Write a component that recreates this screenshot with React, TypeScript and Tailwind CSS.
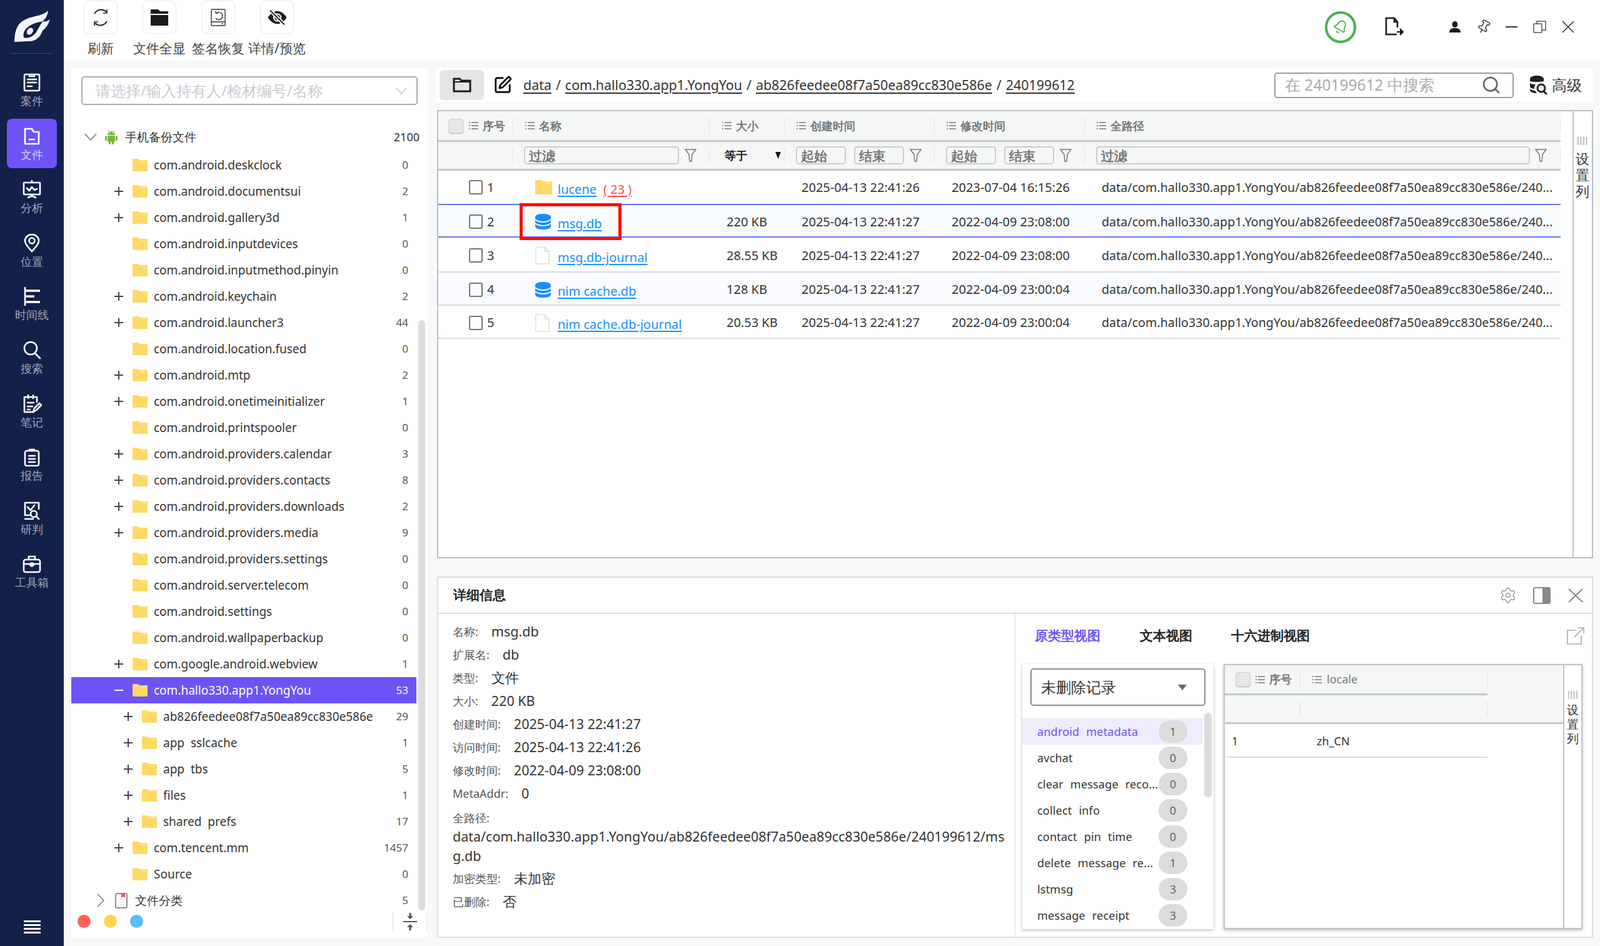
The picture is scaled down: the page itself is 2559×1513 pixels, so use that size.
import { Bell, Pin, Search, Settings, SquarePen } from 'lucide-react';
import { BsEyeSlashFill } from 'react-icons/bs';

const NAV_ITEMS = ['案件', '文件', '分析', '位置', '时间线', '搜索', '笔记', '报告', '研判', '工具箱'];

const TREE_ROWS = [
  { name: 'com.android.deskclock', count: '0' },
  { name: 'com.android.documentsui', count: '2', plus: true },
  { name: 'com.android.gallery3d', count: '1', plus: true },
  { name: 'com.android.inputdevices', count: '0' },
  { name: 'com.android.inputmethod.pinyin', count: '0' },
  { name: 'com.android.keychain', count: '2', plus: true },
  { name: 'com.android.launcher3', count: '44', plus: true },
  { name: 'com.android.location.fused', count: '0' },
  { name: 'com.android.mtp', count: '2', plus: true },
  { name: 'com.android.onetimeinitializer', count: '1', plus: true },
  { name: 'com.android.printspooler', count: '0' },
  { name: 'com.android.providers.calendar', count: '3', plus: true },
  { name: 'com.android.providers.contacts', count: '8', plus: true },
  { name: 'com.android.providers.downloads', count: '2', plus: true },
  { name: 'com.android.providers.media', count: '9', plus: true },
  { name: 'com.android.providers.settings', count: '0' },
  { name: 'com.android.server.telecom', count: '0' },
  { name: 'com.android.settings', count: '0' },
  { name: 'com.android.wallpaperbackup', count: '0' },
  { name: 'com.google.android.webview', count: '1', plus: true },
  { name: 'com.hallo330.app1.YongYou', count: '53', selected: true },
  { name: 'ab826feedee08f7a50ea89cc830e586e', count: '29', plus: true, child: true },
  { name: 'app sslcache', count: '1', plus: true, child: true },
  { name: 'app tbs', count: '5', plus: true, child: true },
  { name: 'files', count: '1', plus: true, child: true },
  { name: 'shared prefs', count: '17', plus: true, child: true },
  { name: 'com.tencent.mm', count: '1457', plus: true },
  { name: 'Source', count: '0' },
];

const PATH_TEXT = 'data/com.hallo330.app1.YongYou/ab826feedee08f7a50ea89cc830e586e/240...';

const FILES = [
  { no: '1', name: 'lucene', kind: 'folder', size: '', created: '2025-04-13 22:41:26', modified: '2023-07-04 16:15:26', rowClass: 'h-[55px] border-b-2 border-[#7070f0]' },
  { no: '2', name: 'msg.db', kind: 'db', size: '220 KB', created: '2025-04-13 22:41:27', modified: '2022-04-09 23:08:00', rowClass: 'h-[52px] pt-[3px] border-b-2 border-[#7070f0] bg-[#f8fbff]', boxed: true },
  { no: '3', name: 'msg.db-journal', kind: 'file', size: '28.55 KB', created: '2025-04-13 22:41:27', modified: '2022-04-09 23:08:00', rowClass: 'h-[56px] pt-[3px] border-b-2 border-[#d9dbde]' },
  { no: '4', name: 'nim cache.db', kind: 'db', size: '128 KB', created: '2025-04-13 22:41:27', modified: '2022-04-09 23:00:04', rowClass: 'h-[53px] pt-[3px] border-b-2 border-[#d9dbde] bg-[#fafbfe]' },
  { no: '5', name: 'nim cache.db-journal', kind: 'file', size: '20.53 KB', created: '2025-04-13 22:41:27', modified: '2022-04-09 23:00:04', rowClass: 'h-[53px] pt-[3px] border-b-2 border-[#d9dbde]' },
];

const TABLES = [
  { name: 'android metadata', count: '1', active: true },
  { name: 'avchat', count: '0' },
  { name: 'clear message reco...', count: '0' },
  { name: 'collect info', count: '0' },
  { name: 'contact pin time', count: '0' },
  { name: 'delete message re...', count: '1' },
  { name: 'lstmsg', count: '3' },
  { name: 'message receipt', count: '3' },
];

function Logo() {
  return (
    <svg width="57" height="50" viewBox="0 0 57 50">
      <path d="M0 50C1 33 3 20 20 13 33 8 46 8 54 0 53 8 50 13 45 17 49 18 53 17 57 14 54 24 48 30 45 32 42 42 34 49 24 49 14 49 8 50 0 50Z" fill="#f4f5f7" />
      <path d="M15 43C12 31 24 20 46 17 41 22 38 30 34 36 28 43 20 45 15 43Z" fill="#12204a" />
      <ellipse cx="25" cy="33" rx="4.5" ry="6" transform="rotate(35 25 33)" fill="#f4f5f7" />
    </svg>
  );
}

function NavIcon({ label }: { label: string }) {
  const stroke = { fill: 'none', stroke: 'white', strokeWidth: 2.6, strokeLinecap: 'round' as const, strokeLinejoin: 'round' as const };
  return (
    <svg width="32" height="30" viewBox="0 0 32 30" {...stroke}>
      {label === '案件' && (
        <>
          <rect x="4" y="2" width="24" height="26" rx="2" />
          <path d="M12 2v3h8V2M9 10h14M9 15h14M9 21h7" />
        </>
      )}
      {label === '文件' && (
        <>
          <path d="M5 3h11l3 5h8v19H5z" />
          <path d="M12 20h8" />
        </>
      )}
      {label === '分析' && (
        <>
          <rect x="3" y="4" width="26" height="19" rx="1" />
          <path d="M16 1v3M8 13l4 4 4-6 4 5 4-2M16 23v3M10 28l6-3 6 3" />
        </>
      )}
      {label === '位置' && (
        <>
          <path d="M16 28C9 20 5 16 5 11a11 10 0 0 1 22 0c0 5-4 9-11 17z" />
          <circle cx="16" cy="11" r="4.5" />
        </>
      )}
      {label === '时间线' && (
        <>
          <path d="M5 1v28" />
          <path d="M5 6h24M5 15h15M5 24h24" strokeWidth="3.4" strokeLinecap="butt" />
        </>
      )}
      {label === '搜索' && (
        <>
          <circle cx="14" cy="12" r="10" />
          <path d="M21 20l8 8" />
        </>
      )}
      {label === '笔记' && (
        <>
          <path d="M24 12V4H4v24h14" />
          <path d="M10 1v5M18 1v5M9 13h10M9 19h8M9 24h4M18 28l2-6 8-8 3 3-8 8z" />
        </>
      )}
      {label === '报告' && (
        <>
          <rect x="5" y="5" width="22" height="24" rx="3" />
          <path d="M12 5V3h8v2M11 13h10M11 18h10M11 23h10" />
        </>
      )}
      {label === '研判' && (
        <>
          <path d="M27 12V2H5v20h7" />
          <path d="M9 9l5 5 6-8M5 28h13" />
          <circle cx="19" cy="20" r="5" />
          <path d="M23 24l4 4" />
        </>
      )}
      {label === '工具箱' && (
        <>
          <rect x="3" y="8" width="26" height="20" rx="3" />
          <path d="M11 8V3h10v5M3 15h10M19 15h10" />
          <circle cx="16" cy="16" r="2.5" fill="white" />
        </>
      )}
    </svg>
  );
}

function FolderIcon({ className = 'h-[20px] w-[24px]' }: { className?: string }) {
  return (
    <svg viewBox="0 0 24 20" preserveAspectRatio="none" className={`shrink-0 ${className}`}>
      <path d="M0 1a1 1 0 0 1 1-1h8l2 2h13v18H1a1 1 0 0 1-1-1z" fill="#ffd966" />
      <path d="M14 4h7v1h-7z" fill="#fff2c4" />
    </svg>
  );
}

function AndroidIcon() {
  return (
    <svg width="20" height="23" viewBox="0 0 20 23" fill="#7cb342" className="ml-[13px] shrink-0">
      <path d="M4 8a6 6 0 0 1 12 0z" />
      <path d="M6 3L4.500 0.500M14 3l1.500-2.500" stroke="#7cb342" strokeWidth="1" />
      <path d="M4 9h12v9a1 1 0 0 1-1 1H5a1 1 0 0 1-1-1z" />
      <rect x="0" y="9" width="3" height="8" rx="1.500" />
      <rect x="17" y="9" width="3" height="8" rx="1.500" />
      <rect x="6" y="18" width="3" height="5" rx="1.500" />
      <rect x="11" y="18" width="3" height="5" rx="1.500" />
      <circle cx="7.500" cy="5" r="0.800" fill="white" />
      <circle cx="12.500" cy="5" r="0.800" fill="white" />
    </svg>
  );
}

function Plus({ minus, light }: { minus?: boolean; light?: boolean }) {
  return (
    <svg width="14" height="14" viewBox="0 0 14 14" className="shrink-0">
      <path d={minus ? 'M0 7h14' : 'M0 7h14M7 0v14'} stroke={light ? 'white' : '#444'} strokeWidth="2" />
    </svg>
  );
}

function Toolbar() {
  const items = [
    {
      label: '刷新',
      icon: (
        <svg width="28" height="28" viewBox="0 0 28 28" fill="none" stroke="#222" strokeWidth="2">
          <path d="M4 8A12 12 0 0 1 23 5M24 20A12 12 0 0 1 5 23" />
          <path d="M24 1v6h-6M4 27v-6h6" strokeWidth="1.6" />
        </svg>
      ),
    },
    {
      label: '文件全显',
      icon: (
        <svg width="28" height="26" viewBox="0 0 28 26" fill="#1c1c1c">
          <path d="M0 0h12l3 3h13v4H0zM0 9h28v17H0z" />
        </svg>
      ),
    },
    {
      label: '签名恢复',
      icon: (
        <svg width="24" height="28" viewBox="0 0 24 28" fill="none" stroke="#333" strokeWidth="1.4">
          <rect x="1" y="1" width="22" height="26" rx="1" />
          <path d="M1 21h22M17 24h3" />
          <path d="M9 7a6 6 0 1 1-1 8" />
          <path d="M7 4l2 3.500 3-1.500" />
        </svg>
      ),
    },
    { label: '详情/预览', icon: <BsEyeSlashFill className="w-[33px] h-[30px] text-[#1c1c1c]" /> },
  ];
  return (
    <div className="flex h-[97px] shrink-0 bg-white pl-[12px]">
      {items.map((item) => (
        <div key={item.label} className="flex w-[94px] flex-col items-center pt-[1px]">
          <div className="flex h-[53px] w-[54px] items-center justify-center rounded-[8px] border border-[#e6e6e6]">{item.icon}</div>
          <span className="mt-[8px] whitespace-nowrap text-[21px] leading-[30px] text-[#444]">{item.label}</span>
        </div>
      ))}
      <div className="ml-auto flex h-[86px] items-center pr-[41px]">
        <div className="flex h-[51px] w-[50px] items-center justify-center rounded-full border-[4px] border-[#4caf50]">
          <Bell className="h-[24px] w-[24px] rotate-[30deg] text-[#4caf50]" strokeWidth={1.8} />
        </div>
        <svg width="30" height="32" viewBox="0 0 30 32" fill="none" stroke="#1c1c1c" strokeWidth="2.600" className="ml-[46px]">
          <path d="M19 28H2V2h13l5 6v9M15 2v6h5" />
          <path d="M19 24h9M24 19l5 5-5 5" fill="#1c1c1c" strokeWidth="2" />
        </svg>
        <svg width="18" height="18" viewBox="0 0 18 18" fill="#1c1c1c" className="ml-[73px]">
          <ellipse cx="9" cy="5" rx="4.500" ry="5" />
          <path d="M0 18c0-5 3-6 6-7h6c3 1 6 2 6 7z" />
        </svg>
        <Pin className="ml-[25px] h-[24px] w-[24px] rotate-[30deg] text-[#333]" strokeWidth={1.5} />
        <div className="ml-[23px] h-[2px] w-[19px] bg-[#333]" />
        <svg width="21" height="20" viewBox="0 0 21 20" fill="none" stroke="#555" strokeWidth="1.500" className="ml-[25px]">
          <rect x="1" y="5" width="13" height="14" rx="1" />
          <path d="M6 5V1h14v14h-6" />
        </svg>
        <svg width="20" height="20" viewBox="0 0 20 20" stroke="#333" strokeWidth="1.600" className="ml-[25px]">
          <path d="M1 1l18 18M19 1L1 19" />
        </svg>
      </div>
    </div>
  );
}

function TreePanel() {
  return (
    <div className="relative h-[1390px] w-[570px] shrink-0 bg-white pt-[13px]">
      <div className="mx-[16px] flex h-[46px] items-center justify-between rounded-[5px] border-2 border-[#aaacaf] pl-[21px] pr-[15px]">
        <span className="text-[24.300px] text-[#c8ccd3]">请选择/输入持有人/检材编号/名称</span>
        <svg width="18" height="11" viewBox="0 0 18 11" fill="none" stroke="#c8ccd3" strokeWidth="1.500">
          <path d="M1 1l8 9 8-9" />
        </svg>
      </div>

      <div className="mt-[30px]">
        <div className="mb-[3px] flex h-[42px] w-[557px] items-center pl-[21px]">
          <svg width="20" height="12" viewBox="0 0 20 12" fill="none" stroke="#666" strokeWidth="1.200">
            <path d="M1 1l9 10 9-10" />
          </svg>
          <AndroidIcon />
          <span className="ml-[12px] text-[19px] text-[#333]">手机备份文件</span>
          <span className="ml-auto text-[18px] text-[#333]">2100</span>
        </div>

        {TREE_ROWS.map((row) => (
          <div
            key={row.name}
            className={`flex h-[42px] w-[552px] items-center pr-[13px] ${row.child ? 'pl-[84px]' : 'pl-[69px]'} ${row.selected ? 'bg-[#6c54f6] text-white' : 'text-[#333]'}`}
          >
            <div className="w-[14px] shrink-0">{row.plus && <Plus />}{row.selected && <Plus minus light />}</div>
            <div className="ml-[15px]"><FolderIcon /></div>
            <span className="ml-[10px] whitespace-nowrap text-[19px] leading-none [word-spacing:5px]">{row.name}</span>
            <span className={`ml-auto text-[17px] ${row.selected ? 'text-white' : 'text-[#555]'}`}>{row.count}</span>
          </div>
        ))}

        <div className="flex h-[42px] w-[552px] items-center pl-[40px] pr-[13px]">
          <svg width="14" height="22" viewBox="0 0 14 22" fill="none" stroke="#666" strokeWidth="1.200" className="shrink-0">
            <path d="M2 1l10 10-10 10" />
          </svg>
          <svg width="20" height="25" viewBox="0 0 20 25" fill="none" className="ml-[16px] shrink-0">
            <rect x="1" y="1" width="18" height="23" rx="2.500" stroke="#8a8f96" strokeWidth="2" />
            <path d="M10 1h6v7l-3-2-3 2z" fill="#f0506e" />
            <path d="M5 11h10M5 15h10M5 19h10" stroke="#e3e5e8" strokeWidth="1.500" />
          </svg>
          <span className="ml-[12px] text-[19px] text-[#333]">文件分类</span>
          <span className="ml-auto text-[17px] text-[#555]">5</span>
        </div>
      </div>

      <div className="-mt-[2px] flex h-[29px] items-center pl-[10px]">
        <div className="h-[21px] w-[21px] shrink-0 rounded-full bg-[#ff6157]" />
        <div className="ml-[21px] h-[21px] w-[21px] shrink-0 rounded-full bg-[#ffd64c]" />
        <div className="ml-[21px] h-[21px] w-[21px] shrink-0 rounded-full bg-[#58bcff]" />
        <div className="ml-[399px] flex h-[29px] w-[55px] shrink-0 items-center justify-center border-x border-[#dcdcdc]">
          <svg width="22" height="28" viewBox="0 0 22 28" fill="#555">
            <path d="M9.500 0h3v5H16l-5 5-5-5h3.500zM0 13h22v2H0zM11 18l5 5h-3.500v5h-3v-5H6z" />
          </svg>
        </div>
      </div>

      <div className="absolute left-[555px] top-[403px] h-[944px] w-[11px] rounded-full bg-[#dcdcdc]" />
    </div>
  );
}

function ListIcon() {
  return (
    <svg width="15" height="14" viewBox="0 0 15 14" stroke="#777" strokeWidth="1.500" className="shrink-0">
      <path d="M0 2h2M4 2h11M0 7h2M4 7h11M0 12h2M4 12h11" />
    </svg>
  );
}

function FunnelIcon() {
  return (
    <svg width="19" height="21" viewBox="0 0 19 21" fill="none" stroke="#777" strokeWidth="1.500" className="shrink-0">
      <path d="M1 1h17l-6 8-1 11H8L7 9z" />
    </svg>
  );
}

function FilterBox({ text, className }: { text: string; className: string }) {
  return (
    <div className={`flex h-[29px] items-center rounded-[5px] border-2 border-[#c9cdcf] pl-[6px] pt-[2px] text-[21px] font-bold text-[#777] ${className}`}>{text}</div>
  );
}

function Checkbox({ header }: { header?: boolean }) {
  if (header) {
    return <div className="h-[23px] w-[23px] shrink-0 rounded-[4px] border border-[#cfd1d3] bg-[#e6e7e8] shadow-[0_1px_2px_#bbb]" />;
  }
  return <div className="h-[23px] w-[22px] shrink-0 rounded-[3px] border-2 border-[#777]" />;
}

function HeaderLabel({ text }: { text: string }) {
  return (
    <>
      <ListIcon />
      <span className="ml-[7px] whitespace-nowrap text-[18px] font-semibold text-[#777]">{text}</span>
    </>
  );
}

function DbIcon() {
  return (
    <svg width="25" height="25" viewBox="0 0 25 25">
      <path d="M0 5C0 2 5 0 12.500 0S25 2 25 5v15c0 3-5 5-12.500 5S0 23 0 20z" fill="#1a8cff" />
      <path d="M0 9c3 3 8 4 12.500 4S22 12 25 9M0 15c3 3 8 4 12.500 4S22 18 25 15" fill="none" stroke="white" strokeWidth="1.800" />
    </svg>
  );
}

function FileIcon() {
  return (
    <svg width="23" height="29" viewBox="0 0 23 29" fill="white" stroke="#dcdfe3" strokeWidth="1.500">
      <path d="M1 1h14l7 7v20H1zM15 1v7h7" />
    </svg>
  );
}

function FileTable() {
  return (
    <div className="mt-[13px] ml-[2px] flex h-[717px] border-2 border-[#bcc0c4] bg-white">
      <div className="w-[1795px] shrink-0">
        <div className="flex h-[49px] items-center border-b-[3px] border-[#c2c6ca] bg-[#f5f7f7]">
          <div className="flex w-[118px] items-center pl-[17px]">
            <Checkbox header />
            <div className="ml-[9px] flex items-center"><ListIcon /><span className="ml-[7px] text-[18px] font-semibold text-[#777]">序号</span></div>
          </div>
          <div className="flex h-[24px] w-[315px] items-center border-l border-[#dfe1e3] pl-[20px]"><HeaderLabel text="名称" /></div>
          <div className="flex h-[24px] w-[120px] items-center border-l border-[#dfe1e3] pl-[20px]"><HeaderLabel text="大小" /></div>
          <div className="flex h-[24px] w-[240px] items-center border-l border-[#dfe1e3] pl-[19px]"><HeaderLabel text="创建时间" /></div>
          <div className="flex h-[24px] w-[240px] items-center border-l border-[#dfe1e3] pl-[19px]"><HeaderLabel text="修改时间" /></div>
          <div className="flex h-[24px] flex-1 items-center border-x border-[#dfe1e3] pl-[19px]"><HeaderLabel text="全路径" /></div>
        </div>
        <div className="flex h-[46px] items-center border-b-[3px] border-[#c2c6ca] bg-[#f5f7f7]">
          <div className="h-[24px] w-[118px]" />
          <div className="flex h-[24px] w-[315px] items-center border-l border-[#dfe1e3] pl-[18px]">
            <FilterBox text="过滤" className="w-[248px]" />
            <div className="ml-[9px]"><FunnelIcon /></div>
          </div>
          <div className="flex h-[24px] w-[120px] items-center border-l border-[#dfe1e3] pl-[24px] pr-[5px]">
            <span className="text-[18px] font-bold text-[#222]">等于</span>
            <svg width="9" height="11" viewBox="0 0 9 11" fill="#111" className="ml-auto">
              <path d="M0 0h9L4.500 11z" />
            </svg>
          </div>
          <div className="flex h-[24px] w-[240px] items-center border-l border-[#dfe1e3] pl-[18px]">
            <FilterBox text="起始" className="w-[80px]" />
            <FilterBox text="结束" className="ml-[13px] w-[80px]" />
            <div className="ml-[9px]"><FunnelIcon /></div>
          </div>
          <div className="flex h-[24px] w-[240px] items-center border-l border-[#dfe1e3] pl-[18px]">
            <FilterBox text="起始" className="w-[80px]" />
            <FilterBox text="结束" className="ml-[13px] w-[80px]" />
            <div className="ml-[9px]"><FunnelIcon /></div>
          </div>
          <div className="flex h-[24px] flex-1 items-center border-x border-[#dfe1e3] pl-[18px]">
            <FilterBox text="过滤" className="w-[694px]" />
            <div className="ml-[8px]"><FunnelIcon /></div>
          </div>
        </div>

        {FILES.map((file) => (
          <div key={file.no} className={`flex items-center text-[20px] text-[#333] ${file.rowClass}`}>
            <div className="flex w-[118px] items-center pl-[49px]">
              <Checkbox />
              <span className="ml-[7px]">{file.no}</span>
            </div>
            <div className="relative flex w-[315px] items-center pl-[37px]">
              <div className="flex w-[36px] items-center">
                {file.kind === 'folder' && <FolderIcon className="h-[23px] w-[27px]" />}
                {file.kind === 'db' && <DbIcon />}
                {file.kind === 'file' && <FileIcon />}
              </div>
              <span className="mt-[6px] whitespace-nowrap text-[20px] text-[#1890ff] underline decoration-2 underline-offset-[3px]">{file.name}</span>
              {file.kind === 'folder' && (
                <span className="ml-[11px] mt-[6px] text-[20px] text-[#ff4d4f] underline decoration-2 underline-offset-[3px]">( 23 )</span>
              )}
              {file.boxed && <div className="absolute left-[12px] top-[-12px] h-[59px] w-[163px] border-[5px] border-[#fb0f05]" />}
            </div>
            <div className="w-[120px] pl-[28px] whitespace-nowrap">{file.size}</div>
            <div className="w-[240px] pl-[28px] whitespace-nowrap">{file.created}</div>
            <div className="w-[240px] pl-[28px] whitespace-nowrap">{file.modified}</div>
            <div className="flex-1 pl-[28px] text-[19.700px] whitespace-nowrap">{PATH_TEXT}</div>
          </div>
        ))}
      </div>
      <ColumnStrip />
    </div>
  );
}

function ColumnStrip() {
  return (
    <div className="ml-[19px] flex flex-1 flex-col items-center border-l-2 border-[#c2c6ca] pr-[2px] pt-[41px] text-[22px] leading-[26px] text-[#333]">
      <svg width="16" height="13" viewBox="0 0 16 13" stroke="#999" strokeWidth="1.200" className="mb-[8px]">
        <path d="M1 0v13M5.500 0v13M10 0v13M14.500 0v13" />
      </svg>
      <span>设</span>
      <span>置</span>
      <span>列</span>
    </div>
  );
}

function DetailLine({ label, value, className = '' }: { label: string; value?: string; className?: string }) {
  return (
    <div className={`flex h-[37px] items-center ${className}`}>
      <span className="text-[18px] text-[#555]">{label}:</span>
      <span className="ml-[21px] text-[21.500px] text-[#333]">{value}</span>
    </div>
  );
}

function DetailPanel() {
  return (
    <div className="mt-[29px] ml-[2px] flex h-[578px] flex-col border-2 border-[#dcdfe0] bg-white">
      <div className="flex h-[58px] shrink-0 items-center border-b-2 border-[#dcdfe0] pl-[24px] pr-[14px]">
        <span className="text-[21px] font-bold text-[#222]">详细信息</span>
        <Settings className="ml-auto h-[28px] w-[28px] text-[#999]" strokeWidth={1.300} />
        <svg width="28" height="27" viewBox="0 0 28 27" className="ml-[26px]">
          <rect x="1" y="1" width="26" height="25" rx="2" fill="none" stroke="#888" strokeWidth="2" />
          <rect x="15" y="2" width="11" height="23" fill="#888" />
        </svg>
        <svg width="24" height="23" viewBox="0 0 24 23" stroke="#666" strokeWidth="1.600" className="ml-[28px]">
          <path d="M1 1l22 21M23 1L1 22" />
        </svg>
      </div>
      <div className="flex min-h-0 flex-1">
        <div className="w-[923px] shrink-0 border-r border-[#dcdfe0] pl-[23px] pt-[10px]">
          <DetailLine label="名称" value="msg.db" />
          <DetailLine label="扩展名" value="db" />
          <DetailLine label="类型" value="文件" />
          <DetailLine label="大小" value="220 KB" />
          <DetailLine label="创建时间" value="2025-04-13 22:41:27" />
          <DetailLine label="访问时间" value="2025-04-13 22:41:26" />
          <DetailLine label="修改时间" value="2022-04-09 23:08:00" />
          <DetailLine label="MetaAddr" value="0" />
          <DetailLine label="全路径" className="mt-[2px]" />
          <div className="-mt-[5px] w-[888px] break-all text-[21.500px] leading-[31px] text-[#333]">
            data/com.hallo330.app1.YongYou/ab826feedee08f7a50ea89cc830e586e/240199612/msg.db
          </div>
          <DetailLine label="加密类型" value="未加密" className="mt-[3px]" />
          <DetailLine label="已删除" value="否" />
        </div>
        <div className="flex-1">
          <div className="flex h-[80px] items-center pb-[10px] pl-[31px] pr-[12px] text-[21px] font-bold text-[#222]">
            <span className="text-[#6c54f6]">原类型视图</span>
            <span className="ml-[63px]">文本视图</span>
            <span className="ml-[62px]">十六进制视图</span>
            <svg width="28" height="28" viewBox="0 0 28 28" fill="none" stroke="#aaa" strokeWidth="1.600" className="ml-auto">
              <path d="M14 5H1v22h22V14M12 16L27 1M18 1h9v9" />
            </svg>
          </div>
          <div className="flex pl-[11px]">
            <RecordList />
            <RecordTable />
          </div>
        </div>
      </div>
    </div>
  );
}

function RecordList() {
  return (
    <div className="relative h-[424px] w-[306px] shrink-0 bg-white pt-[7px] shadow-[0_2px_5px_rgba(0,0,0,0.25)]">
      <div className="mx-[13px] flex h-[60px] items-center justify-between rounded-[5px] border-2 border-[#8a8c8f] pl-[15px] pr-[28px]">
        <span className="text-[24px] text-[#333]">未删除记录</span>
        <svg width="14" height="9" viewBox="0 0 14 9" fill="#666">
          <path d="M0 0h14L7 9z" />
        </svg>
      </div>
      <div className="mt-[20px]">
        {TABLES.map((table) => (
          <div
            key={table.name}
            className={`flex h-[42px] w-[288px] items-center pl-[24px] ${table.active ? 'bg-[#eeecfe] text-[#6c54f6]' : 'text-[#333]'}`}
          >
            <span className="whitespace-nowrap text-[18px] tracking-[0.2px] [word-spacing:6px]">{table.name}</span>
            <span className="absolute left-[218px] flex h-[36px] w-[46px] items-center justify-center rounded-full bg-[#dcdcdc] text-[18px] text-[#666]">{table.count}</span>
          </div>
        ))}
      </div>
      <div className="absolute left-[291px] top-[78px] h-[135px] w-[12px] rounded-full bg-[#dcdcdc]" />
    </div>
  );
}

function RecordTable() {
  return (
    <div className="ml-[16px] flex h-[424px] w-[574px] shrink-0 border-2 border-[#c0c4c8] bg-white shadow-[0_2px_5px_rgba(0,0,0,0.25)]">
      <div className="w-[541px] shrink-0">
        <div className="h-[94px] border-b-[3px] border-[#c2c6ca] bg-[#f5f7f7]">
          <div className="flex h-[48px] w-[420px] items-center border-b-[3px] border-[#c2c6ca]">
            <div className="flex w-[120px] items-center pl-[18px]">
              <Checkbox header />
              <div className="ml-[8px] flex items-center"><ListIcon /><span className="ml-[7px] text-[18px] font-semibold text-[#777]">序号</span></div>
            </div>
            <div className="flex h-[24px] w-[300px] items-center border-x border-[#dfe1e3] pl-[19px]">
              <ListIcon />
              <span className="ml-[8px] text-[18px] text-[#777]">locale</span>
            </div>
          </div>
          <div className="flex h-[43px] w-[420px] items-center">
            <div className="h-[24px] w-[120px]" />
            <div className="h-[24px] w-[300px] border-x border-[#dfe1e3]" />
          </div>
        </div>
        <div className="ml-[3px] flex h-[54px] w-[417px] items-center border-b-2 border-[#d9dbde] pt-[2px] text-[18px] text-[#333]">
          <span className="w-[144px] pl-[8px]">1</span>
          <span>zh_CN</span>
        </div>
      </div>
      <div className="flex flex-1 flex-col items-center border-l-2 border-[#c2c6ca] pt-[41px] text-[19px] leading-[23px] text-[#333]">
        <svg width="15" height="13" viewBox="0 0 15 13" stroke="#999" strokeWidth="1.200" className="mb-[6px]">
          <path d="M1 0v13M5 0v13M9.500 0v13M14 0v13" />
        </svg>
        <span>设</span>
        <span>置</span>
        <span>列</span>
      </div>
    </div>
  );
}

export default function App() {
  return (
    <div className="flex h-[1513px] w-[2559px] overflow-hidden bg-[#f7f8f8] font-['Noto_Sans','Noto_Sans_CJK_SC',sans-serif]">
      <aside className="flex w-[102px] shrink-0 flex-col items-center bg-[#12204a] pt-[17px]">
        <Logo />
        <div className="mt-[18px] h-[1px] w-[68px] bg-[#3d4a72]" />
        <nav className="mt-[18px] flex flex-col gap-[6.600px]">
          {NAV_ITEMS.map((label) => (
            <div
              key={label}
              className={`flex h-[79px] w-[80px] flex-col items-center pt-[13px] ${label === '文件' ? 'rounded-[8px] bg-[#6c54f6] text-[#d9d4ff]' : 'text-[#a0a8b8]'}`}
            >
              <NavIcon label={label} />
              <span className="mt-[2px] whitespace-nowrap text-[18px] leading-[24px]">{label}</span>
            </div>
          ))}
        </nav>
        <div className="mb-[20px] mt-auto flex w-[27px] flex-col gap-[3px]">
          <div className="h-[3px] bg-white" />
          <div className="h-[3px] bg-white" />
          <div className="h-[3px] bg-white" />
          <div className="h-[3px] bg-white" />
        </div>
      </aside>

      <div className="flex min-w-0 flex-1 flex-col">
        <Toolbar />
        <div className="flex pl-[12px] pt-[12px]">
          <TreePanel />
          <div className="ml-[13px] w-[1851px] shrink-0">
            <div className="flex h-[54px] items-center bg-white">
              <div className="ml-[6px] flex h-[48px] w-[71px] items-center justify-center rounded-[6px] bg-[#e5e5e5]">
                <svg width="30" height="24" viewBox="0 0 30 24" fill="none" stroke="#1c1c1c" strokeWidth="3">
                  <path d="M2 2h9l3 3h14v17H2z" />
                  <path d="M2 7h26" strokeWidth="2" />
                </svg>
              </div>
              <SquarePen className="ml-[15px] h-[30px] w-[30px] text-[#111]" strokeWidth={2.300} />
              <div className="ml-[18px] flex items-center whitespace-nowrap text-[21.400px] text-[#333]">
                <span className="underline decoration-2 underline-offset-[4px]">data</span>
                <span className="mx-[7px]">/</span>
                <span className="underline decoration-2 underline-offset-[4px]">com.hallo330.app1.YongYou</span>
                <span className="mx-[7px]">/</span>
                <span className="underline decoration-2 underline-offset-[4px]">ab826feedee08f7a50ea89cc830e586e</span>
                <span className="mx-[7px]">/</span>
                <span className="underline decoration-2 underline-offset-[4px]">240199612</span>
              </div>
              <div className="ml-auto flex h-[41px] w-[383px] items-center justify-between rounded-[5px] border-2 border-[#9a9c9f] pl-[15px] pr-[18px]">
                <span className="text-[24.500px] text-[#aaa]">在 240199612 中搜索</span>
                <Search className="h-[32px] w-[32px] text-[#666]" strokeWidth={2} />
              </div>
              <svg width="30" height="30" viewBox="0 0 30 30" className="ml-[25px]">
                <path d="M1 5c0-3 5-5 11-5s11 2 11 5v4c-5 1-13 2-22 0z" fill="#222" />
                <path d="M1 12c3 2 7 2 9 2-2 3-2 5-2 7-3 0-6-1-7-3zM1 21c2 2 5 2 8 3l3 4c-6 0-11-2-11-5z" fill="#222" />
                <circle cx="19" cy="20" r="6" fill="none" stroke="#222" strokeWidth="3" />
                <path d="M23 25l5 5" stroke="#222" strokeWidth="3" />
              </svg>
              <span className="ml-[6px] pr-[18px] text-[24px] text-[#333]">高级</span>
            </div>
            <FileTable />
            <DetailPanel />
          </div>
        </div>
      </div>
    </div>
  );
}
